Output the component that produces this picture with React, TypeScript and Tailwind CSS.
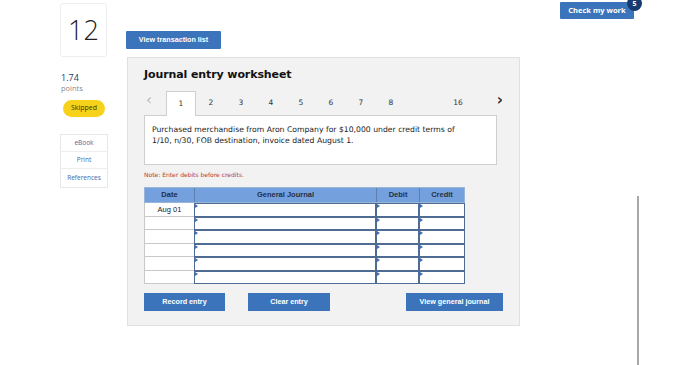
import React from "react";

const verdana = { fontFamily: '"DejaVu Sans", Verdana, sans-serif' };
const arial = { fontFamily: '"Liberation Sans", Arial, sans-serif' };

function InputCell({ w }: { w: string }) {
  return (
    <div className={`${w} h-full relative border-[1.5px] border-[#4d6b93] bg-white`}>
      <div className="absolute left-0 top-0 w-0 h-0 border-t-[2px] border-b-[2px] border-l-[3px] border-t-transparent border-b-transparent border-l-[#3f6fb5]" />
    </div>
  );
}

export default function App() {
  const tabs = ["1", "2", "3", "4", "5", "6", "7", "8"];
  const rows = ["Aug 01", "", "", "", "", ""];
  return (
    <div className="w-[700px] h-[365px] bg-white overflow-hidden flex" style={{ fontFamily: '"Open Sans", Lato, sans-serif' }}>
      {/* left column */}
      <div className="ml-[60px] w-[47px] flex flex-col">
        <div className="mt-[3px] h-[54px] w-[47px] border border-[#eeeeee] rounded-[3px] flex items-center justify-center text-[27px] text-[#222] font-light">
          12
        </div>
        <div className="mt-[15px] text-[9px] leading-[11px] text-[#1f3a5f] pl-[1px]">1.74</div>
        <div className="text-[7.5px] leading-[11px] text-[#8a8a8a] pl-[1px]">points</div>
        <div className="mt-[6px] ml-[3px] w-[42px] h-[17px] rounded-full bg-[#f6d31a] flex items-center justify-center text-[7px] text-[#3f3400]">
          Skipped
        </div>
        <div className="mt-[17px] w-[48px] border border-[#e8e8e8] text-[6.5px] text-[#4a6a9a] flex flex-col">
          <div className="h-[17px] flex items-center justify-center border-b border-[#eeeeee]">eBook</div>
          <div className="h-[17px] flex items-center justify-center border-b border-[#eeeeee]">Print</div>
          <div className="h-[18px] flex items-center justify-center">References</div>
        </div>
      </div>

      {/* main column */}
      <div className="ml-[19px] w-[394px] flex flex-col">
        <div className="mt-[31px] w-[95px] h-[18px] bg-[#3b74bb] rounded-[1px] flex items-center justify-center text-white text-[7.2px] font-bold" style={arial}>
          View transaction list
        </div>
        <div className="mt-[8px] ml-[1px] w-[393px] h-[269px] bg-[#f2f2f2] border border-[#e0e0e0] flex flex-col pl-[16px]">
          <div className="mt-[10px] h-[15px] text-[11px] font-bold text-[#111] flex items-center tracking-[-0.1px]" style={verdana}>
            Journal entry worksheet
          </div>
          {/* tabs */}
          <div className="mt-[7px] h-[25px] flex items-end text-[7.5px] text-[#333]" style={verdana}>
            <div className="w-[22px] h-full flex items-center pl-[2px] pb-[4px] text-[15px] text-[#999] font-light">‹</div>
            {tabs.map((t, i) => (
              <div
                key={t}
                className={
                  i === 0
                    ? "w-[30px] h-[25px] bg-white border-t border-l border-r border-[#cfcfcf] flex items-center justify-center relative z-10 -mb-[1px] pb-[1px]"
                    : "w-[30px] h-[25px] flex items-center justify-center"
                }
              >
                {t}
              </div>
            ))}
            <div className="w-[42px]" />
            <div className="w-[20px] h-[25px] flex items-center justify-center">16</div>
            <div className="w-[35px] h-[25px] flex items-center justify-end pb-[4px] text-[15px] font-bold text-[#333]">›</div>
          </div>
          {/* content box */}
          <div className="w-[353px] h-[50px] bg-white border border-[#cfcfcf] pl-[7px] pt-[8px] text-[7.7px] leading-[11px] text-[#222]" style={verdana}>
            Purchased merchandise from Aron Company for $10,000 under credit terms of
            <br />
            1/10, n/30, FOB destination, invoice dated August 1.
          </div>
          <div className="mt-[5px] h-[9px] text-[6px] leading-[9px] text-[#b03a3a]" style={verdana}>
            Note: Enter debits before credits.
          </div>
          {/* table */}
          <div className="mt-[8px] w-[321px] flex flex-col" style={arial}>
            <div className="h-[16px] flex bg-[#74a1dd] border border-[#9bb5d6] text-[7.5px] font-bold text-[#1f2f4a]">
              <div className="w-[50px] flex items-center justify-center border-r border-[#5d7fae]">Date</div>
              <div className="w-[182px] flex items-center justify-center border-r border-[#5d7fae]">General Journal</div>
              <div className="w-[43px] flex items-center justify-center border-r border-[#5d7fae]">Debit</div>
              <div className="flex-1 flex items-center justify-center">Credit</div>
            </div>
            {rows.map((d, i) => (
              <div key={i} className="h-[13.5px] flex">
                <div className="w-[50px] h-full bg-white border-l border-b border-[#c8c8c8] flex items-center justify-center text-[7.5px] text-[#222]">
                  {d}
                </div>
                <InputCell w="w-[182px]" />
                <InputCell w="w-[43px]" />
                <InputCell w="w-[46px]" />
              </div>
            ))}
          </div>
          {/* buttons */}
          <div className="mt-[9px] flex text-[7.2px] font-bold text-white" style={arial}>
            <div className="w-[81px] h-[18px] bg-[#3b74bb] flex items-center justify-center">Record entry</div>
            <div className="ml-[23px] w-[82px] h-[18px] bg-[#3b74bb] flex items-center justify-center">Clear entry</div>
            <div className="ml-[76px] w-[97px] h-[18px] bg-[#3b74bb] flex items-center justify-center">View general journal</div>
          </div>
        </div>
      </div>

      {/* right column */}
      <div className="flex-1 flex flex-col">
        <div className="relative mt-[2px] ml-[40px] w-[74px] h-[17px] bg-[#3b74bb] rounded-[1px] flex items-center justify-center text-white text-[7.5px] font-bold">
          Check my work
          <div className="absolute -right-[8px] -top-[6px] w-[15px] h-[15px] rounded-full bg-[#173b6e] flex items-center justify-center text-[7px] leading-none text-white">
            5
          </div>
        </div>
        <div className="mt-[177px] ml-[117px] w-[2px] h-[169px] bg-[#a8a8a8]" />
      </div>
    </div>
  );
}
